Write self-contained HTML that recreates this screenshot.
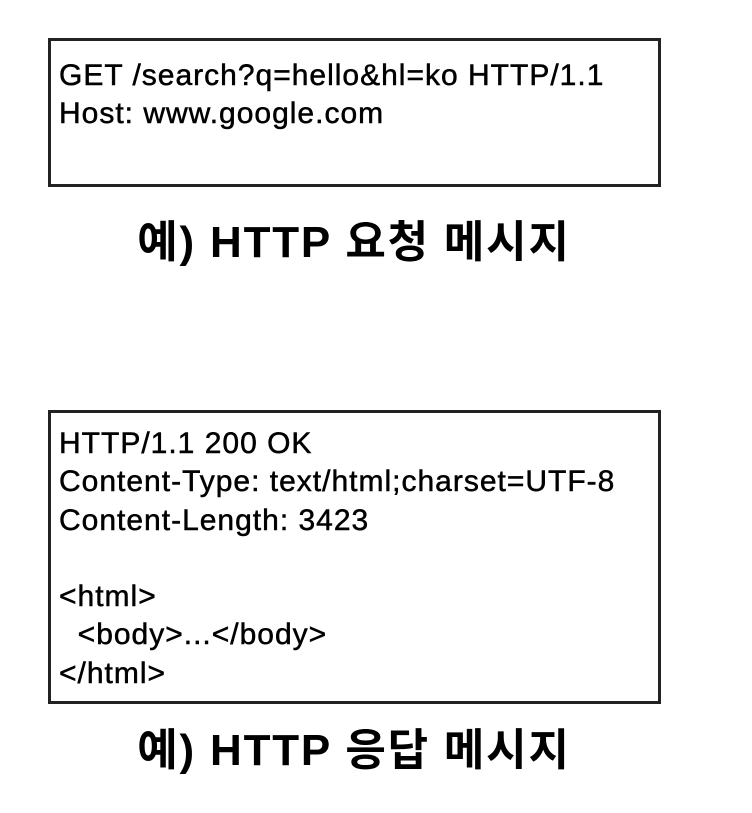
<!DOCTYPE html>
<html><head><meta charset="utf-8"><style>
body{margin:0;background:#fff;width:752px;height:813px;position:relative;overflow:hidden;font-family:"Liberation Sans","Noto Sans CJK KR",sans-serif;color:#000}
.box{position:absolute;left:48px;width:613px;border:3px solid #222;box-sizing:border-box}
.t{position:absolute;left:59px;font-size:30px;letter-spacing:1px;line-height:38.3px;white-space:pre;-webkit-text-stroke:0.5px #000}
.cap{position:absolute;left:0;width:708px;text-align:center;font-size:44px;letter-spacing:1.8px;font-weight:bold}
</style></head><body>
<div class="box" style="top:38px;height:149px"></div>
<div class="t" style="top:57px">GET /search?q=hello&amp;hl=ko HTTP/1.1
Host: www.google.com</div>
<div class="cap" style="top:206px">예) HTTP 요청 메시지</div>
<div class="box" style="top:410px;height:294px"></div>
<div class="t" style="top:425px">HTTP/1.1 200 OK
Content-Type: text/html;charset=UTF-8
Content-Length: 3423

&lt;html&gt;
  &lt;body&gt;...&lt;/body&gt;
&lt;/html&gt;</div>
<div class="cap" style="top:714px">예) HTTP 응답 메시지</div>
</body></html>
